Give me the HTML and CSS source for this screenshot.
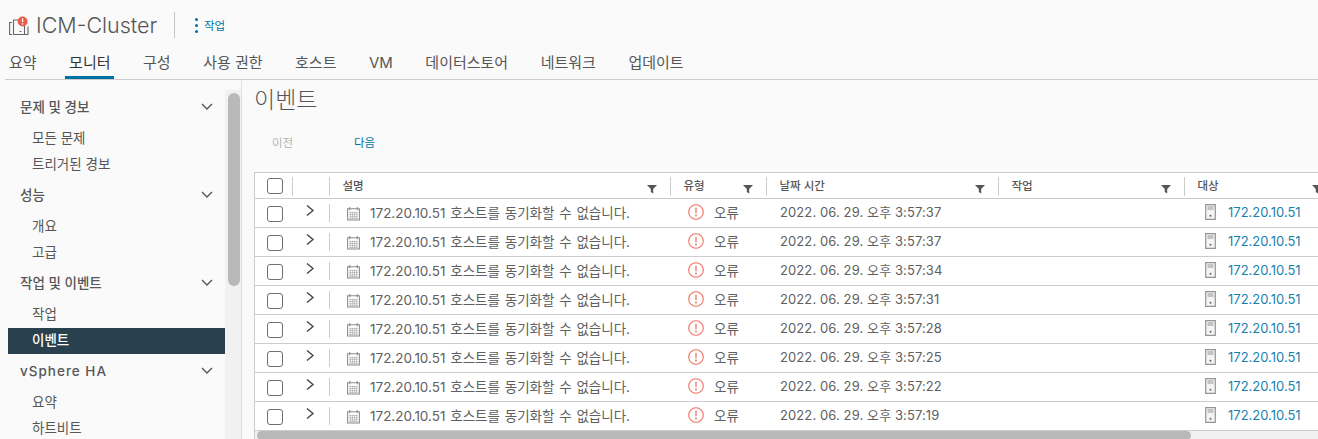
FILE: index.html
```html
<!DOCTYPE html>
<html lang="ko">

<head>
    <meta charset="UTF-8">
    <title>ICM-Cluster</title>
    <link rel="stylesheet" href="styles.css">
</head>

<body>
    <svg class="defs" width="0" height="0">
        <symbol id="i-chev-down" viewBox="0 0 14 14"><path d="M2 4l5 5 5-5" fill="none" stroke="#565656" stroke-width="1.4"/></symbol>
        <symbol id="i-chev-right" viewBox="0 0 10 14"><path d="M2 1.500l6 5-6 5" fill="none" stroke="#444" stroke-width="1.400"/></symbol>
        <symbol id="i-filter" viewBox="0 0 10 10"><path d="M0 1h10L6.200 5v4.500L3.800 8V5z" fill="#565656"/></symbol>
        <symbol id="i-cal" viewBox="0 0 14 14"><path d="M1.500 2.500h11v10.500h-11zM3.500 1v3M10.500 1v3" fill="none" stroke="#8a8a8a"/><path d="M3 6h8M3 8h8M3 10h8M3 11.800h8M4 5.500v6.500M6 5.500v6.500M8 5.500v6.500M10 5.500v6.500" stroke="#a6a6a6" stroke-width=".6"/></symbol>
        <symbol id="i-error" viewBox="0 0 16 16"><circle cx="8" cy="8" r="7.300" fill="none" stroke="#f0705f" stroke-width="1.100"/><path d="M8 3.800v5.400" stroke="#f0705f" stroke-width="1.300"/><circle cx="8" cy="11.500" r=".9" fill="#f0705f"/></symbol>
        <symbol id="i-host" viewBox="0 0 11 16"><path d="M.7.700h9.600v14.600H.7z" fill="#f4f4f4" stroke="#949494" stroke-width="1.200"/><path d="M2.500 3h6M2.500 5h6" stroke="#949494"/><circle cx="5.500" cy="11.800" r="1" fill="#666"/></symbol>
    </svg>

    <div class="page">
        <div class="title-bar">
            <svg class="cluster-icon" width="22" height="20" viewBox="0 0 22 20">
                <path d="M3 6.500H.6v12H3M16 18.500h3v-8" fill="none" stroke="#666" stroke-width="1.100"/>
                <path d="M4.500 18.500V4h11v14.500zM10.500 15.500h2" fill="none" stroke="#666" stroke-width="1.100"/>
                <circle cx="13.600" cy="5.500" r="5" fill="#e8604c"/>
                <path d="M13.600 2.500v3.500M13.600 7.200v1.300" stroke="#fff" stroke-width="1.300"/>
            </svg>
            <h1 class="title">ICM-Cluster</h1>
            <div class="title-sep"></div>
            <span class="dots"><i></i><i></i><i></i></span>
            <a class="actions">작업</a>
        </div>

        <div class="tabs">
            <a class="tab">요약</a>
            <a class="tab active">모니터</a>
            <a class="tab">구성</a>
            <a class="tab">사용 권한</a>
            <a class="tab">호스트</a>
            <a class="tab">VM</a>
            <a class="tab">데이터스토어</a>
            <a class="tab">네트워크</a>
            <a class="tab">업데이트</a>
        </div>

        <div class="content">
            <div class="sidebar">
                <div class="nav-head">문제 및 경보 <svg><use href="#i-chev-down"/></svg></div>
                <div class="nav-item">모든 문제</div>
                <div class="nav-item">트리거된 경보</div>
                <div class="nav-head">성능 <svg><use href="#i-chev-down"/></svg></div>
                <div class="nav-item">개요</div>
                <div class="nav-item">고급</div>
                <div class="nav-head">작업 및 이벤트 <svg><use href="#i-chev-down"/></svg></div>
                <div class="nav-item">작업</div>
                <div class="nav-item selected">이벤트</div>
                <div class="nav-head"><span class="nav-latin">vSphere HA</span> <svg><use href="#i-chev-down"/></svg></div>
                <div class="nav-item">요약</div>
                <div class="nav-item">하트비트</div>
            </div>
            <div class="side-scroll"><div class="side-thumb"></div></div>

            <div class="main">
                <h2 class="heading">이벤트</h2>
                <div class="pager">
                    <span class="prev">이전</span>
                    <a class="next">다음</a>
                </div>

                <div class="grid">
                    <div class="row head">
                        <div class="cell"><span class="check"></span></div>
                        <div class="cell sep"></div>
                        <div class="cell sep">설명 <svg class="filter"><use href="#i-filter"/></svg></div>
                        <div class="cell sep">유형 <svg class="filter"><use href="#i-filter"/></svg></div>
                        <div class="cell sep">날짜 시간 <svg class="filter"><use href="#i-filter"/></svg></div>
                        <div class="cell sep">작업 <svg class="filter"><use href="#i-filter"/></svg></div>
                        <div class="cell sep">대상 <svg class="filter"><use href="#i-filter"/></svg></div>
                    </div>
                    <div class="row">
                        <div class="cell box"><span class="check"></span></div>
                        <div class="cell expand"><svg class="chev"><use href="#i-chev-right"/></svg></div>
                        <div class="cell sep desc"><svg class="cal"><use href="#i-cal"/></svg>172.20.10.51 호스트를 동기화할 수 없습니다.</div>
                        <div class="cell type"><svg class="err"><use href="#i-error"/></svg>오류</div>
                        <div class="cell time">2022. 06. 29. 오후 3:57:37</div>
                        <div class="cell"></div>
                        <div class="cell target"><svg class="host"><use href="#i-host"/></svg><a>172.20.10.51</a></div>
                    </div>
                    <div class="row">
                        <div class="cell box"><span class="check"></span></div>
                        <div class="cell expand"><svg class="chev"><use href="#i-chev-right"/></svg></div>
                        <div class="cell sep desc"><svg class="cal"><use href="#i-cal"/></svg>172.20.10.51 호스트를 동기화할 수 없습니다.</div>
                        <div class="cell type"><svg class="err"><use href="#i-error"/></svg>오류</div>
                        <div class="cell time">2022. 06. 29. 오후 3:57:37</div>
                        <div class="cell"></div>
                        <div class="cell target"><svg class="host"><use href="#i-host"/></svg><a>172.20.10.51</a></div>
                    </div>
                    <div class="row">
                        <div class="cell box"><span class="check"></span></div>
                        <div class="cell expand"><svg class="chev"><use href="#i-chev-right"/></svg></div>
                        <div class="cell sep desc"><svg class="cal"><use href="#i-cal"/></svg>172.20.10.51 호스트를 동기화할 수 없습니다.</div>
                        <div class="cell type"><svg class="err"><use href="#i-error"/></svg>오류</div>
                        <div class="cell time">2022. 06. 29. 오후 3:57:34</div>
                        <div class="cell"></div>
                        <div class="cell target"><svg class="host"><use href="#i-host"/></svg><a>172.20.10.51</a></div>
                    </div>
                    <div class="row">
                        <div class="cell box"><span class="check"></span></div>
                        <div class="cell expand"><svg class="chev"><use href="#i-chev-right"/></svg></div>
                        <div class="cell sep desc"><svg class="cal"><use href="#i-cal"/></svg>172.20.10.51 호스트를 동기화할 수 없습니다.</div>
                        <div class="cell type"><svg class="err"><use href="#i-error"/></svg>오류</div>
                        <div class="cell time">2022. 06. 29. 오후 3:57:31</div>
                        <div class="cell"></div>
                        <div class="cell target"><svg class="host"><use href="#i-host"/></svg><a>172.20.10.51</a></div>
                    </div>
                    <div class="row">
                        <div class="cell box"><span class="check"></span></div>
                        <div class="cell expand"><svg class="chev"><use href="#i-chev-right"/></svg></div>
                        <div class="cell sep desc"><svg class="cal"><use href="#i-cal"/></svg>172.20.10.51 호스트를 동기화할 수 없습니다.</div>
                        <div class="cell type"><svg class="err"><use href="#i-error"/></svg>오류</div>
                        <div class="cell time">2022. 06. 29. 오후 3:57:28</div>
                        <div class="cell"></div>
                        <div class="cell target"><svg class="host"><use href="#i-host"/></svg><a>172.20.10.51</a></div>
                    </div>
                    <div class="row">
                        <div class="cell box"><span class="check"></span></div>
                        <div class="cell expand"><svg class="chev"><use href="#i-chev-right"/></svg></div>
                        <div class="cell sep desc"><svg class="cal"><use href="#i-cal"/></svg>172.20.10.51 호스트를 동기화할 수 없습니다.</div>
                        <div class="cell type"><svg class="err"><use href="#i-error"/></svg>오류</div>
                        <div class="cell time">2022. 06. 29. 오후 3:57:25</div>
                        <div class="cell"></div>
                        <div class="cell target"><svg class="host"><use href="#i-host"/></svg><a>172.20.10.51</a></div>
                    </div>
                    <div class="row">
                        <div class="cell box"><span class="check"></span></div>
                        <div class="cell expand"><svg class="chev"><use href="#i-chev-right"/></svg></div>
                        <div class="cell sep desc"><svg class="cal"><use href="#i-cal"/></svg>172.20.10.51 호스트를 동기화할 수 없습니다.</div>
                        <div class="cell type"><svg class="err"><use href="#i-error"/></svg>오류</div>
                        <div class="cell time">2022. 06. 29. 오후 3:57:22</div>
                        <div class="cell"></div>
                        <div class="cell target"><svg class="host"><use href="#i-host"/></svg><a>172.20.10.51</a></div>
                    </div>
                    <div class="row">
                        <div class="cell box"><span class="check"></span></div>
                        <div class="cell expand"><svg class="chev"><use href="#i-chev-right"/></svg></div>
                        <div class="cell sep desc"><svg class="cal"><use href="#i-cal"/></svg>172.20.10.51 호스트를 동기화할 수 없습니다.</div>
                        <div class="cell type"><svg class="err"><use href="#i-error"/></svg>오류</div>
                        <div class="cell time">2022. 06. 29. 오후 3:57:19</div>
                        <div class="cell"></div>
                        <div class="cell target"><svg class="host"><use href="#i-host"/></svg><a>172.20.10.51</a></div>
                    </div>
                    <div class="grid-scroll"><div class="grid-thumb"></div></div>
                </div>
            </div>
        </div>
    </div>
</body>

</html>
```

FILE: styles.css
```css
html,
body {
    margin: 0;
    padding: 0;
    height: 439px;
    overflow: hidden;
}

body {
    font-family: Inter, "Noto Sans CJK KR", sans-serif;
    background-color: #fafafa;
    color: #565656;
    font-size: 13px;
}

.defs {
    display: block;
    height: 0;
}

.page {
    width: 1318px;
    height: 439px;
    overflow: hidden;
}

.title-bar {
    display: flex;
    align-items: center;
    height: 50px;
    padding-left: 9px;
}

.cluster-icon {
    margin-right: 5px;
    margin-top: 1px;
}

.title {
    margin: 0;
    font-size: 21.5px;
    font-weight: 300;
    color: #565656;
    width: 138px;
    white-space: nowrap;
}

.title-sep {
    width: 1px;
    height: 26px;
    background-color: #c4c4c4;
    margin-right: 20px;
}

.dots {
    display: flex;
    flex-direction: column;
    gap: 3px;
    margin-right: 6px;
}

.dots i {
    display: block;
    width: 3px;
    height: 3px;
    border-radius: 50%;
    background-color: #0072a3;
}

.actions {
    font-size: 11.5px;
    color: #0072a3;
}

.tabs {
    display: flex;
    height: 29px;
    border-bottom: 1px solid #ccc;
    margin-left: 5px;
}

.tab {
    display: block;
    font-size: 15px;
    line-height: 26px;
    color: #565656;
    white-space: nowrap;
    padding: 0 3px 0 4px;
    margin-right: 25.5px;
}

.tab.active {
    color: #333;
    border-bottom: 3px solid #0072a3;
    height: 26px;
}

.content {
    display: flex;
    height: 359px;
}

.sidebar {
    flex: none;
    width: 225px;
    padding: 11px 0 0 8px;
    box-sizing: border-box;
}

.nav-head {
    display: flex;
    justify-content: space-between;
    align-items: center;
    height: 30px;
    margin-top: 2px;
    padding: 0 11px 0 12px;
    font-size: 13.5px;
    font-weight: 500;
    color: #565656;
}

.nav-head:first-child {
    margin-top: 0;
}

.nav-head svg {
    width: 14px;
    height: 14px;
    margin-top: 2px;
}

.nav-latin {
    letter-spacing: 1px;
    padding-top: 1px;
}

.nav-item {
    height: 26px;
    line-height: 26px;
    padding-left: 24px;
    font-size: 13.5px;
    color: #565656;
}

.nav-head + .nav-item {
    margin-top: 4px;
}

.nav-item.selected {
    background-color: #29414e;
    color: #fff;
    font-weight: 500;
    line-height: 24px;
    margin-top: 1px;
    margin-bottom: -1px;
}

.side-scroll {
    flex: none;
    width: 16px;
    margin-top: 10px;
    background-color: #f1f1f1;
    padding: 3px 0 0 3px;
    box-sizing: border-box;
}

.side-thumb {
    width: 12px;
    height: 193px;
    border-radius: 6px;
    background-color: #b9b9b9;
}

.main {
    flex: none;
    width: 1077px;
    padding-left: 12px;
    box-sizing: border-box;
    overflow: hidden;
    border-left: 1px solid #e0e0e0;
}

.heading {
    margin: 0;
    height: 38px;
    font-size: 23px;
    line-height: 40px;
    font-weight: 300;
    color: #565656;
}

.pager {
    display: flex;
    height: 54px;
    padding-top: 17px;
    box-sizing: border-box;
    font-size: 11.5px;
    line-height: 16px;
    padding-left: 18px;
}

.prev {
    color: #b3b3b3;
    width: 82px;
}

.next {
    color: #0072a3;
}

.grid {
    width: 1081px;
    border-top: 1px solid #ccc;
    border-left: 1px solid #ccc;
    background-color: #fff;
}

.row {
    display: grid;
    grid-template-columns: 37px 37px 341px 96px 232px 186px 151px;
    height: 29px;
    box-sizing: border-box;
    border-bottom: 1px solid #ccc;
}

.row.head {
    height: 26px;
}

.cell {
    position: relative;
    display: flex;
    align-items: center;
    padding-left: 12px;
    box-sizing: border-box;
    white-space: nowrap;
    font-size: 13.5px;
    color: #606060;
}

.head .cell {
    font-size: 11.5px;
    font-weight: 500;
    padding-left: 13.5px;
    padding-bottom: 1px;
    color: #565656;
}

.head .cell:first-child {
    padding-left: 12px;
    padding-bottom: 0;
}

.box {
    padding-top: 1px;
}

.sep::before {
    content: "";
    position: absolute;
    left: 0;
    top: 5px;
    width: 1px;
    height: 18px;
    background-color: #ccc;
}

.head .sep::before {
    top: 4px;
    height: 19px;
}

.check {
    display: block;
    width: 16px;
    height: 16px;
    border: 1px solid #6f6f6f;
    border-radius: 3px;
    box-sizing: border-box;
    background-color: #fff;
}

.filter {
    position: absolute;
    right: 13px;
    top: 11px;
    width: 10px;
    height: 10px;
}

.expand {
    padding: 0 0 5px 13px;
}

.chev {
    width: 10px;
    height: 14px;
}

.desc {
    padding-left: 17px;
    padding-bottom: 3px;
    word-spacing: 1px;
}

.cal {
    width: 15px;
    height: 15px;
    margin-right: 9px;
    flex: none;
    margin-top: 4px;
}

.type {
    padding-left: 18px;
    padding-bottom: 3px;
}

.err {
    width: 16px;
    height: 16px;
    margin-right: 10px;
    flex: none;
}

.time {
    padding-left: 14px;
    padding-bottom: 4px;
    font-size: 13px;
    letter-spacing: .1px;
}

.target {
    padding-left: 21px;
    padding-bottom: 2px;
}

.host {
    width: 11px;
    height: 16px;
    margin-right: 12px;
    flex: none;
}

.target a {
    color: #1a7fb0;
    font-size: 13px;
}

.grid-scroll {
    height: 9px;
    background-color: #f1f1f1;
    padding-left: 2px;
}

.grid-thumb {
    width: 934px;
    height: 9px;
    border-radius: 5px;
    background-color: #b9b9b9;
}
```
